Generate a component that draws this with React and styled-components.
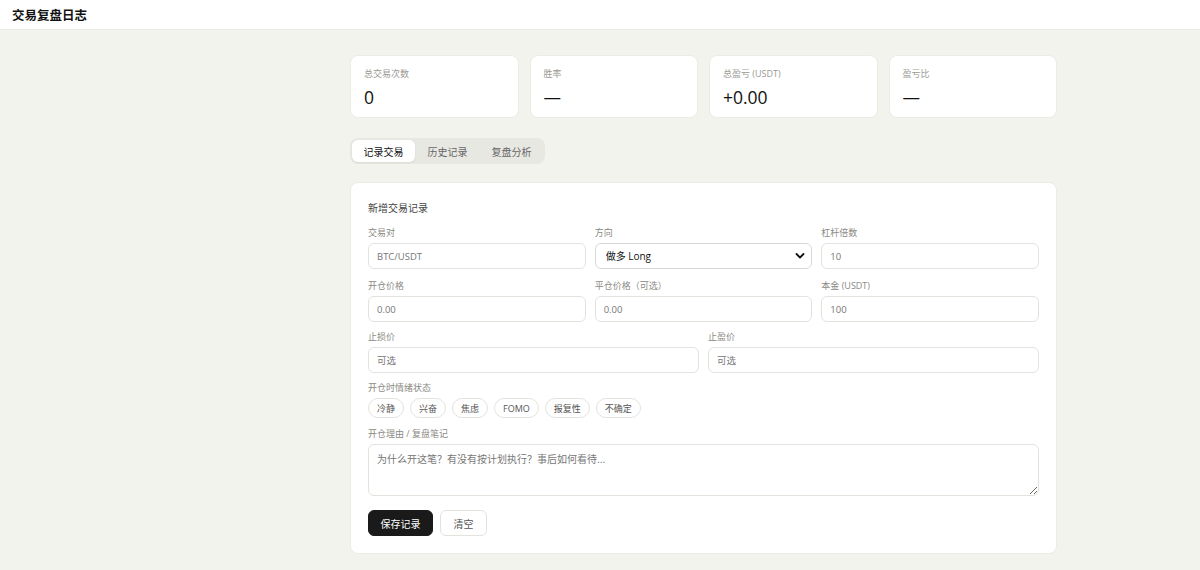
import React, { useState } from "react";
import styled, { createGlobalStyle } from "styled-components";

const Global = createGlobalStyle`
  html, body { margin: 0; padding: 0; background: #f3f3ee; }
  body { font-family: "Open Sans", "Noto Sans CJK SC", sans-serif; color: #1a1a1a; }
  * { box-sizing: border-box; }
`;

const Header = styled.header`
  height: 30px;
  background: #fff;
  border-bottom: 1px solid #ecece6;
  display: flex;
  align-items: center;
  padding: 0 12px;
`;
const Title = styled.h1`
  margin: 0;
  font-size: 12.5px;
  font-weight: 700;
  color: #111;
  font-family: "Noto Sans CJK SC", sans-serif;
`;

const Main = styled.main`
  width: 707px;
  margin-left: 350px;
  padding-top: 25px;
  display: flex;
  flex-direction: column;
`;

const Stats = styled.div`
  display: grid;
  grid-template-columns: repeat(4, 1fr);
  gap: 11px;
`;
const StatCard = styled.div`
  background: #fff;
  border: 1px solid #ecece6;
  border-radius: 8px;
  height: 63px;
  padding: 11px 13px;
  display: flex;
  flex-direction: column;
  gap: 4px;
`;
const StatLabel = styled.div`
  font-size: 9px;
  color: #9a9a94;
  font-family: "Open Sans", "Noto Sans CJK SC", sans-serif;
  line-height: 14px;
`;
const StatValue = styled.div`
  font-size: 17.5px;
  color: #111;
  line-height: 24px;
  font-family: "Open Sans", sans-serif;
`;

const Tabs = styled.div`
  margin-top: 20px;
  align-self: flex-start;
  display: flex;
  gap: 1px;
  background: #e8e8e2;
  border-radius: 8px;
  padding: 2px;
`;
const Tab = styled.button`
  border: 0;
  background: ${(p) => (p.$active ? "#fff" : "transparent")};
  box-shadow: ${(p) => (p.$active ? "0 1px 2px rgba(0,0,0,0.06)" : "none")};
  color: ${(p) => (p.$active ? "#111" : "#666")};
  border-radius: 6px;
  height: 22px;
  padding: 0 11.5px;
  font-size: 10px;
  font-family: "Noto Sans CJK SC", sans-serif;
  cursor: pointer;
`;

const FormCard = styled.section`
  margin-top: 18px;
  background: #fff;
  border: 1px solid #ecece6;
  border-radius: 8px;
  padding: 17px 17px 17px;
`;
const FormTitle = styled.div`
  font-size: 10px;
  color: #444;
  font-family: "Noto Sans CJK SC", sans-serif;
  line-height: 16px;
  margin-bottom: 10px;
`;
const Grid = styled.div`
  display: grid;
  grid-template-columns: repeat(${(p) => p.$cols}, 1fr);
  gap: 10px 9px;
  margin-bottom: 8px;
`;
const Field = styled.label`
  display: flex;
  flex-direction: column;
  gap: 3px;
`;
const Label = styled.span`
  font-size: 9px;
  color: #8a8a84;
  line-height: 14px;
  font-family: "Open Sans", "Noto Sans CJK SC", sans-serif;
`;
const Input = styled.input`
  height: 26px;
  border: 1px solid #e3e3de;
  border-radius: 6px;
  padding: 0 8px;
  font-size: 9.5px;
  color: #555;
  font-family: "Open Sans", "Noto Sans CJK SC", sans-serif;
  background: #fff;
  outline: none;
  &::placeholder { color: #777; }
`;
const SelectWrap = styled.div`
  position: relative;
  display: flex;
`;
const Select = styled.select`
  flex: 1;
  height: 26px;
  appearance: none;
  border: 1px solid #d8d8d2;
  border-radius: 6px;
  padding: 0 10px;
  font-size: 10px;
  color: #111;
  font-family: "Open Sans", "Noto Sans CJK SC", sans-serif;
  background: #fff;
  outline: none;
`;
const Chevron = styled.svg`
  position: absolute;
  right: 7px;
  top: 9px;
  pointer-events: none;
`;
const Chips = styled.div`
  display: flex;
  gap: 6px;
  margin-top: 0;
  margin-bottom: 9px;
`;
const Chip = styled.button`
  height: 20px;
  padding: 0 8px;
  border-radius: 10px;
  border: 1px solid #e3e3de;
  background: #fff;
  color: #555;
  font-size: 9px;
  font-family: "Open Sans", "Noto Sans CJK SC", sans-serif;
  cursor: pointer;
`;
const TextArea = styled.textarea`
  height: 52px;
  border: 1px solid #e3e3de;
  border-radius: 6px;
  padding: 6px 8px;
  font-size: 10px;
  color: #555;
  font-family: "Noto Sans CJK SC", sans-serif;
  resize: vertical;
  outline: none;
  &::placeholder { color: #777; }
`;
const Actions = styled.div`
  display: flex;
  gap: 7px;
  margin-top: 14px;
`;
const Button = styled.button`
  height: 26px;
  padding: 0 ${(p) => (p.$primary ? "11.5px" : "12.5px")};
  border-radius: 6px;
  border: 1px solid ${(p) => (p.$primary ? "#1a1a1a" : "#e3e3de")};
  background: ${(p) => (p.$primary ? "#1a1a1a" : "#fff")};
  color: ${(p) => (p.$primary ? "#fff" : "#555")};
  font-size: 10px;
  font-family: "Noto Sans CJK SC", sans-serif;
  cursor: pointer;
`;

const stats = [
  ["总交易次数", "0"],
  ["胜率", "—"],
  ["总盈亏 (USDT)", "+0.00"],
  ["盈亏比", "—"],
];
const emotions = ["冷静", "兴奋", "焦虑", "FOMO", "报复性", "不确定"];

export default function App() {
  const [tab, setTab] = useState(0);
  return (
    <>
      <Global />
      <Header>
        <Title>交易复盘日志</Title>
      </Header>
      <Main>
        <Stats>
          {stats.map(([l, v]) => (
            <StatCard key={l}>
              <StatLabel>{l}</StatLabel>
              <StatValue>{v}</StatValue>
            </StatCard>
          ))}
        </Stats>
        <Tabs>
          {["记录交易", "历史记录", "复盘分析"].map((t, i) => (
            <Tab key={t} $active={tab === i} onClick={() => setTab(i)}>
              {t}
            </Tab>
          ))}
        </Tabs>
        <FormCard>
          <FormTitle>新增交易记录</FormTitle>
          <Grid $cols={3}>
            <Field>
              <Label>交易对</Label>
              <Input placeholder="BTC/USDT" />
            </Field>
            <Field>
              <Label>方向</Label>
              <SelectWrap>
                <Select defaultValue="long">
                  <option value="long">做多 Long</option>
                  <option value="short">做空 Short</option>
                </Select>
                <Chevron width="10" height="8" viewBox="0 0 10 8">
                  <path d="M1.5 2 L5 5.5 L8.5 2" fill="none" stroke="#111" strokeWidth="1.8" strokeLinecap="round" strokeLinejoin="round" />
                </Chevron>
              </SelectWrap>
            </Field>
            <Field>
              <Label>杠杆倍数</Label>
              <Input placeholder="10" />
            </Field>
            <Field>
              <Label>开仓价格</Label>
              <Input placeholder="0.00" />
            </Field>
            <Field>
              <Label>平仓价格（可选）</Label>
              <Input placeholder="0.00" />
            </Field>
            <Field>
              <Label>本金 (USDT)</Label>
              <Input placeholder="100" />
            </Field>
          </Grid>
          <Grid $cols={2}>
            <Field>
              <Label>止损价</Label>
              <Input placeholder="可选" />
            </Field>
            <Field>
              <Label>止盈价</Label>
              <Input placeholder="可选" />
            </Field>
          </Grid>
          <Field as="div">
            <Label>开仓时情绪状态</Label>
            <Chips>
              {emotions.map((e) => (
                <Chip key={e}>{e}</Chip>
              ))}
            </Chips>
          </Field>
          <Field>
            <Label>开仓理由 / 复盘笔记</Label>
            <TextArea placeholder="为什么开这笔？有没有按计划执行？事后如何看待..." />
          </Field>
          <Actions>
            <Button $primary>保存记录</Button>
            <Button>清空</Button>
          </Actions>
        </FormCard>
      </Main>
    </>
  );
}
